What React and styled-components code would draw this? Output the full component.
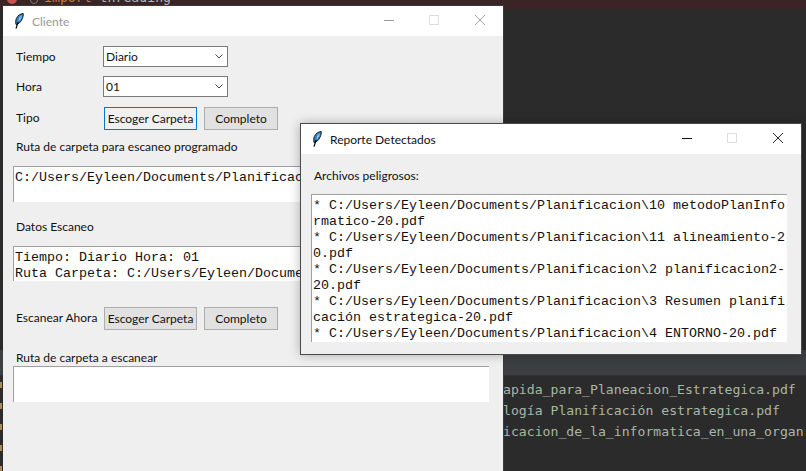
import React from 'react'
import styled, { createGlobalStyle } from 'styled-components'

const Global = createGlobalStyle`
    html, body { margin: 0; padding: 0; background: #2b2b2b; }
    * { box-sizing: border-box; }
`

function Feather() {
    return (
        <svg width="9" height="16" viewBox="0 0 9 16">
            <path d="M8.2 0.5C5.4 0.8 2.6 2.6 1.4 5.4 0.6 7.4 0.5 9.6 1.1 11.6 3.4 11.2 5.6 9.2 6.9 6.4 7.9 4.4 8.5 2.2 8.2 0.5Z" fill="#2f86c4" stroke="#10181f" strokeWidth="1" />
            <path d="M6.8 2.4 3 9M5 3.4 4.6 6.4M6.6 4.6 4 7.6" stroke="#bcdcf2" strokeWidth="0.6" fill="none" />
            <path d="M3.2 8.6 1 15.6" stroke="#000" strokeWidth="1.2" fill="none" />
        </svg>
    )
}

function WindowButtons({ active }) {
    const color = active ? '#111' : '#999'
    return (
        <Controls>
            <svg width="10" height="10" viewBox="0 0 10 10"><path d="M0 5.5H10" stroke={color} /></svg>
            <svg width="10" height="10" viewBox="0 0 10 10"><rect x="0.5" y="0.5" width="9" height="9" fill="none" stroke="#dedede" /></svg>
            <svg width="10" height="10" viewBox="0 0 10 10"><path d="M0 0 10 10M10 0 0 10" stroke={color} strokeWidth="0.9" /></svg>
        </Controls>
    )
}

function Combo({ value }) {
    return (
        <Select>
            {value}
            <svg width="8" height="5" viewBox="0 0 8 5"><path d="M0.5 0.5 4 4 7.5 0.5" fill="none" stroke="#444" strokeWidth="1" /></svg>
        </Select>
    )
}

function App() {
    return (
        <>
            <Global />
            <Desktop>
                <TopStrip>
                    <RedDot />
                    <FoldMark />
                    <TopCode><Keyword>import</Keyword> threading</TopCode>
                </TopStrip>
                <Editor />
                <ToolBand />
                <Terminal>
                    <Ticks />
                    <TermLine>apida_para_Planeacion_Estrategica.pdf</TermLine>
                    <TermLine>logía Planificación estrategica.pdf</TermLine>
                    <TermLine>icacion_de_la_informatica_en_una_organ</TermLine>
                </Terminal>

                <ClientWindow>
                    <TitleBar>
                        <TitleIcon><Feather /></TitleIcon>
                        <TitleText>Cliente</TitleText>
                        <WindowButtons />
                    </TitleBar>
                    <ClientBody>
                        <FieldRow>
                            <Label>Tiempo</Label>
                            <Combo value="Diario" />
                        </FieldRow>
                        <FieldRow>
                            <Label>Hora</Label>
                            <Combo value="01" />
                        </FieldRow>
                        <ButtonRow>
                            <Label>Tipo</Label>
                            <Button $focused>Escoger Carpeta</Button>
                            <Button $wide>Completo</Button>
                        </ButtonRow>
                        <Caption>Ruta de carpeta para escaneo programado</Caption>
                        <TextBox $height={36}>C:/Users/Eyleen/Documents/Planificacion</TextBox>
                        <SectionCaption>Datos Escaneo</SectionCaption>
                        <TextBox $height={35}>
                            Tiempo: Diario Hora: 01{'\n'}Ruta Carpeta: C:/Users/Eyleen/Documents/Planificacion
                        </TextBox>
                        <ScanRow>
                            <Label>Escanear Ahora</Label>
                            <Button>Escoger Carpeta</Button>
                            <Button $wide>Completo</Button>
                        </ScanRow>
                        <LastCaption>Ruta de carpeta a escanear</LastCaption>
                        <TextBox $height={36} />
                    </ClientBody>
                </ClientWindow>

                <ReportWindow>
                    <TitleBar>
                        <TitleIcon><Feather /></TitleIcon>
                        <TitleText $active>Reporte Detectados</TitleText>
                        <WindowButtons active />
                    </TitleBar>
                    <ReportBody>
                        <ReportCaption>Archivos peligrosos:</ReportCaption>
                        <ReportList>
                            {'* C:/Users/Eyleen/Documents/Planificacion\\10 metodoPlanInfo\nrmatico-20.pdf\n* C:/Users/Eyleen/Documents/Planificacion\\11 alineamiento-2\n0.pdf\n* C:/Users/Eyleen/Documents/Planificacion\\2 planificacion2-\n20.pdf\n* C:/Users/Eyleen/Documents/Planificacion\\3 Resumen planifi\ncación estrategica-20.pdf\n* C:/Users/Eyleen/Documents/Planificacion\\4 ENTORNO-20.pdf'}
                        </ReportList>
                    </ReportBody>
                </ReportWindow>
            </Desktop>
        </>
    )
}

const uiFont = `"Lato", "Noto Sans", sans-serif`

const Desktop = styled.div`
    position: relative;
    width: 806px;
    height: 471px;
    overflow: hidden;
    display: flex;
    flex-direction: column;
    background: #2b2b2b;
`
const TopStrip = styled.div`
    height: 9px;
    flex: none;
    background: #3b2425;
    overflow: hidden;
    position: relative;
`
const RedDot = styled.div`
    position: absolute;
    left: 7px;
    top: -6px;
    width: 10px;
    height: 10px;
    border-radius: 50%;
    background: #c75450;
`
const FoldMark = styled.div`
    position: absolute;
    left: 30px;
    top: -4px;
    width: 8px;
    height: 8px;
    border-radius: 50%;
    border: 1px solid #777;
`
const TopCode = styled.div`
    position: absolute;
    left: 44px;
    top: -10px;
    font: 13.2px "DejaVu Sans Mono", monospace;
    color: #a9b7c6;
    white-space: pre;
`
const Keyword = styled.span`
    color: #cc7832;
`
const Editor = styled.div`
    flex: none;
    height: 341px;
    background: #2b2b2b;
`
const ToolBand = styled.div`
    flex: none;
    height: 25px;
    background: #3c3f41;
`
const Terminal = styled.div`
    position: relative;
    flex: 1;
    padding: 3px 0 0 503px;
    background: #2b2b2b;
    border-top: 1px solid #323232;
    overflow: hidden;
`
const Ticks = styled.div`
    position: absolute;
    left: 0;
    top: 6px;
    width: 2px;
    height: 90px;
    background: repeating-linear-gradient(to bottom, #a98a5c 0 6px, transparent 6px 21px);
`
const TermLine = styled.div`
    font: 13.15px/21px "DejaVu Sans Mono", monospace;
    color: #a9b7a6;
    white-space: pre;
`
const WindowFrame = styled.div`
    position: absolute;
    background: #efefef;
    display: flex;
    flex-direction: column;
`
const ClientWindow = styled(WindowFrame)`
    left: 3px;
    top: 5px;
    width: 501px;
    height: 471px;
    border-top: 1px solid #3a3a3a;
    border-right: 1px solid #3a3a3a;
`
const ReportWindow = styled(WindowFrame)`
    left: 300px;
    top: 123px;
    width: 502px;
    height: 232px;
    border: 1px solid #4a4a4a;
    box-shadow: 0 0 10px rgba(0, 0, 0, 0.28);
`
const TitleBar = styled.div`
    flex: none;
    height: 30px;
    background: #fff;
    display: flex;
    align-items: center;
`
const TitleIcon = styled.div`
    width: 29px;
    padding-left: 12px;
    display: flex;
    align-items: center;
`
const TitleText = styled.div`
    flex: 1;
    font: 12px ${uiFont};
    color: ${props => props.$active ? '#111' : '#999'};
`
const Controls = styled.div`
    display: flex;
    align-items: center;
    gap: 36px;
    padding-right: 18px;
    margin-top: -2px;

    & > svg:first-child { margin-right: -1px; }
`
const ClientBody = styled.div`
    flex: 1;
    padding: 10px 0 0 10px;
    display: flex;
    flex-direction: column;
`
const FieldRow = styled.div`
    display: flex;
    align-items: center;
    height: 21px;
    margin-bottom: 9px;
`
const Label = styled.div`
    width: 90px;
    padding-left: 3px;
    font: 12px ${uiFont};
    color: #111;
    white-space: nowrap;
`
const Select = styled.div`
    width: 125px;
    height: 21px;
    background: #fff;
    border: 1px solid #7a7a7a;
    padding: 0 4px 0 2px;
    display: flex;
    align-items: center;
    justify-content: space-between;
    font: 12px ${uiFont};
    color: #111;
`
const ButtonRow = styled.div`
    display: flex;
    align-items: center;
    gap: 7px;
    height: 23px;
    margin: 1px 0 0;

    & > div:first-child { margin-right: -6px; margin-top: -3px; }
`
const ScanRow = styled(ButtonRow)`
    margin-top: 26px;
`
const Button = styled.div`
    width: ${props => props.$wide ? '74px' : '93px'};
    height: 23px;
    display: flex;
    align-items: center;
    justify-content: center;
    background: ${props => props.$focused ? '#f0f0f0' : '#e1e1e1'};
    border: 1px solid ${props => props.$focused ? '#0078d7' : '#adadad'};
    font: 12px ${uiFont};
    color: #111;
    white-space: nowrap;
`
const Caption = styled.div`
    margin: 8px 0 11px 3px;
    height: 17px;
    font: 12px/17px ${uiFont};
    color: #111;
`
const SectionCaption = styled(Caption)`
    margin: 16px 0 11px 3px;
`
const LastCaption = styled(Caption)`
    margin: 19px 0 0 3px;
`
const TextBox = styled.div`
    width: 476px;
    height: ${props => props.$height}px;
    flex: none;
    background: #fff;
    border-top: 1px solid #a0a0a0;
    border-left: 1px solid #a0a0a0;
    padding: 3px 0 0 1px;
    font: 13.33px/16px "Liberation Mono", monospace;
    color: #111;
    white-space: pre;
    overflow: hidden;
`
const ReportBody = styled.div`
    flex: 1;
    padding: 10px 0 0 10px;
    display: flex;
    flex-direction: column;
`
const ReportCaption = styled.div`
    height: 17px;
    margin: 3px 0 10px 3px;
    font: 12px/17px ${uiFont};
    color: #111;
`
const ReportList = styled.div`
    width: 476px;
    height: 148px;
    background: #fff;
    border-top: 1px solid #a0a0a0;
    border-left: 1px solid #a0a0a0;
    padding: 3px 0 0 1px;
    font: 13.33px/16px "Liberation Mono", monospace;
    color: #111;
    white-space: pre;
    overflow: hidden;
`

export default App
